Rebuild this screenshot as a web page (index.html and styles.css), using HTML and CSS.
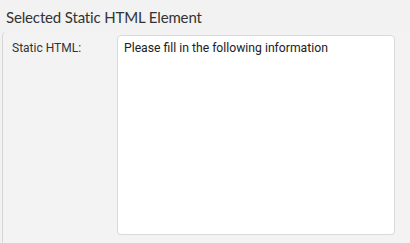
FILE: index.html
```html
<!DOCTYPE html>
<html>
<head>
<meta charset="utf-8">
<link rel="stylesheet" href="styles.css">
</head>
<body>
<div class="page">
  <h1 class="title">Selected Static HTML Element</h1>
  <div class="panel">
    <div class="row">
      <label class="label">Static HTML:</label>
      <div class="field">Please fill in the following information</div>
    </div>
  </div>
</div>
</body>
</html>
```
FILE: styles.css
```css
html, body {
  margin: 0;
  padding: 0;
  background: #f2f2f2;
}
.page {
  width: 410px;
  height: 243px;
  overflow: hidden;
  padding: 0 0 0 2px;
  box-sizing: border-box;
}
.title {
  margin: 0;
  padding: 8px 0 0 4px;
  height: 32px;
  box-sizing: border-box;
  font-family: "Lato", sans-serif;
  font-weight: 400;
  font-size: 15px;
  letter-spacing: -0.15px;
  color: #333;
  line-height: 18px;
}
.panel {
  border-left: 1px solid #d6d6d6;
  border-top-left-radius: 4px;
  background: #f3f3f3;
  height: 220px;
  padding: 3px 0 0 9px;
  box-sizing: border-box;
}
.row {
  display: flex;
}
.label {
  width: 105px;
  font-family: "Roboto", sans-serif;
  font-size: 12px;
  color: #333;
  padding-top: 6px;
  line-height: 15px;
}
.field {
  width: 278px;
  height: 200px;
  box-sizing: border-box;
  background: #fff;
  border: 1px solid #d9d9d9;
  border-radius: 4px;
  padding: 5px 6px;
  font-family: "Roboto", sans-serif;
  font-size: 12.2px;
  line-height: 15px;
  color: #222;
}
```
